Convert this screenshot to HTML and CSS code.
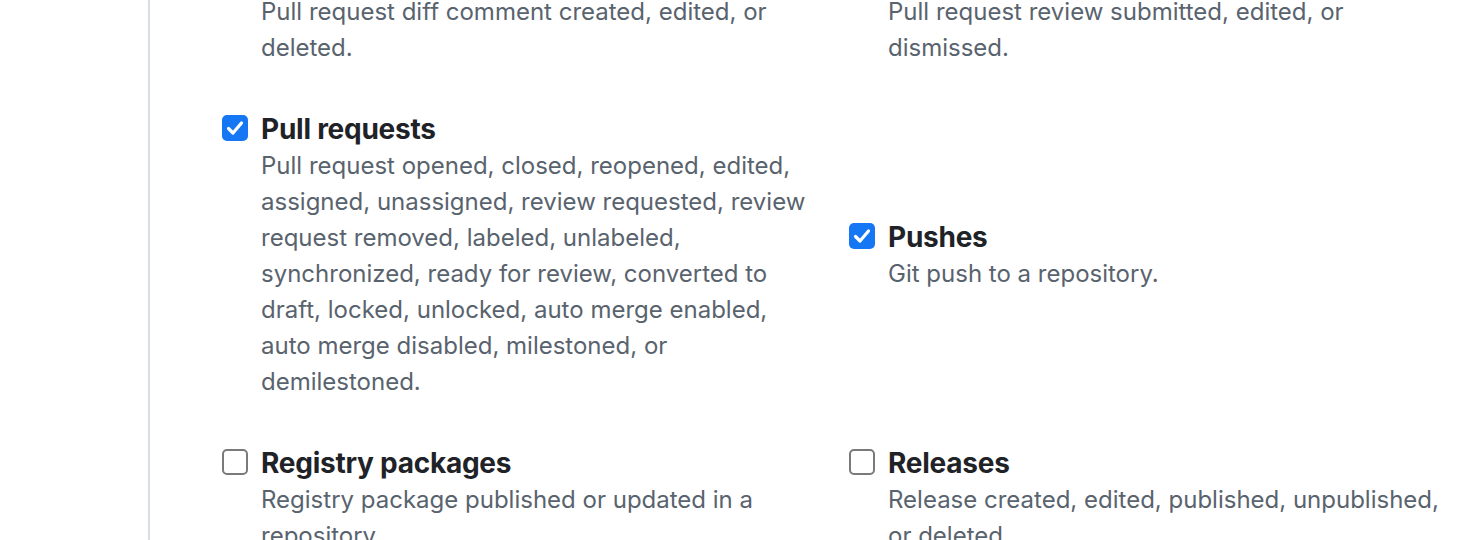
FILE: index.html
```html
<!DOCTYPE html>
<html lang="en">
<head>
<meta charset="utf-8">
<title>Webhook events</title>
<link rel="stylesheet" href="styles.css">
</head>
<body>
<div class="page">
  <div class="main">
    <div class="events">
      <div class="event">
        <span class="box checked"><svg viewBox="0 0 26 26" width="26" height="26"><path d="M6.5 13.5 L11 18 L19.5 8" fill="none" stroke="#fff" stroke-width="3.2" stroke-linecap="round" stroke-linejoin="round"/></svg></span>
        <div class="text">
          <div class="title">Pull request review comments</div>
          <p class="desc">Pull request diff comment created, edited, or deleted.</p>
        </div>
      </div>
      <div class="event">
        <span class="box checked"><svg viewBox="0 0 26 26" width="26" height="26"><path d="M6.5 13.5 L11 18 L19.5 8" fill="none" stroke="#fff" stroke-width="3.2" stroke-linecap="round" stroke-linejoin="round"/></svg></span>
        <div class="text">
          <div class="title">Pull request reviews</div>
          <p class="desc">Pull request review submitted, edited, or dismissed.</p>
        </div>
      </div>
      <div class="event">
        <span class="box checked"><svg viewBox="0 0 26 26" width="26" height="26"><path d="M6.5 13.5 L11 18 L19.5 8" fill="none" stroke="#fff" stroke-width="3.2" stroke-linecap="round" stroke-linejoin="round"/></svg></span>
        <div class="text">
          <div class="title">Pull requests</div>
          <p class="desc">Pull request opened, closed, reopened, edited, assigned, unassigned, review requested, review request removed, labeled, unlabeled, synchronized, ready for review, converted to draft, locked, unlocked, auto merge enabled, auto merge disabled, milestoned, or demilestoned.</p>
        </div>
      </div>
      <div class="event">
        <span class="box checked"><svg viewBox="0 0 26 26" width="26" height="26"><path d="M6.5 13.5 L11 18 L19.5 8" fill="none" stroke="#fff" stroke-width="3.2" stroke-linecap="round" stroke-linejoin="round"/></svg></span>
        <div class="text">
          <div class="title">Pushes</div>
          <p class="desc">Git push to a repository.</p>
        </div>
      </div>
      <div class="event">
        <span class="box"></span>
        <div class="text">
          <div class="title">Registry packages</div>
          <p class="desc">Registry package published or updated in a repository.</p>
        </div>
      </div>
      <div class="event">
        <span class="box"></span>
        <div class="text">
          <div class="title">Releases</div>
          <p class="desc">Release created, edited, published, unpublished, or deleted.</p>
        </div>
      </div>
    </div>
  </div>
</div>
</body>
</html>
```

FILE: styles.css
```css
html, body {
  margin: 0;
  padding: 0;
  background: #ffffff;
}
body {
  font-family: Inter, "Noto Sans", sans-serif;
  height: 540px;
  overflow: hidden;
}
.page {
  padding-left: 148px;
  height: 540px;
}
.main {
  border-left: 2px solid #d8dee4;
  height: 100%;
  padding-left: 72px;
  display: flex;
  flex-direction: column;
}
.events {
  display: grid;
  grid-template-columns: 627px 626px;
  row-gap: 44px;
  align-items: center;
  margin-top: -44px;
}
.event {
  display: flex;
  align-items: flex-start;
  gap: 13px;
}
.box {
  flex: none;
  width: 26px;
  height: 26px;
  box-sizing: border-box;
  margin-top: 5px;
  border-radius: 5px;
  border: 2px solid #7a7a7a;
  background: #fff;
  display: flex;
}
.box.checked {
  border: none;
  background: #1677f5;
}
.text {
  width: 556px;
}
.title {
  padding-top: 1px;
  font-size: 28px;
  line-height: 36px;
  font-weight: 700;
  letter-spacing: -0.25px;
  color: #1f2328;
}
.desc {
  margin: 1px 0 0;
  font-size: 24px;
  line-height: 36px;
  color: #59636e;
}
```
